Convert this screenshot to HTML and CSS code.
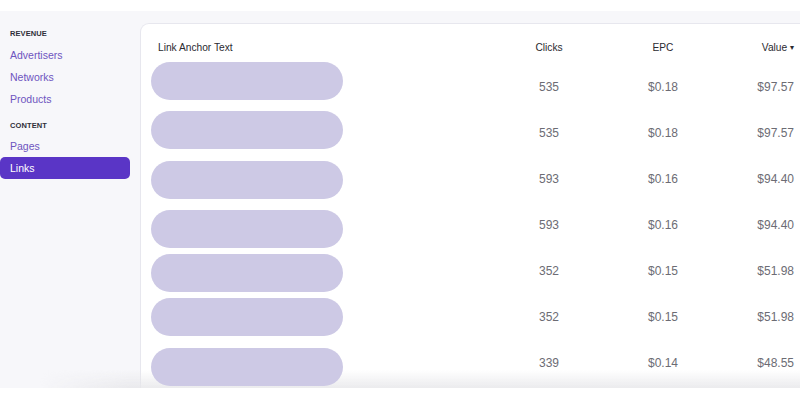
FILE: index.html
```html
<!DOCTYPE html>
<html>
<head>
<meta charset="utf-8">
<link rel="stylesheet" href="styles.css">
</head>
<body>
<div class="page">
  <div class="topbar"></div>
  <div class="main">
    <nav class="sidebar">
      <div class="label">Revenue</div>
      <a class="item lbl-gap">Advertisers</a>
      <a class="item">Networks</a>
      <a class="item">Products</a>
      <div class="label section">Content</div>
      <a class="item pages">Pages</a>
      <a class="item active">Links</a>
    </nav>
    <section class="card">
      <div class="thead">
        <div class="c-anchor">Link Anchor Text</div>
        <div class="c-num">Clicks</div>
        <div class="c-num">EPC</div>
        <div class="c-val">Value <span class="caret">&#9662;</span></div>
      </div>
      <div class="row"><div class="c-anchor"><span class="pill off-n6"></span></div><div class="c-num">535</div><div class="c-num">$0.18</div><div class="c-val">$97.57</div></div>
      <div class="row"><div class="c-anchor"><span class="pill off-n3"></span></div><div class="c-num">535</div><div class="c-num">$0.18</div><div class="c-val">$97.57</div></div>
      <div class="row"><div class="c-anchor"><span class="pill off-p1"></span></div><div class="c-num">593</div><div class="c-num">$0.16</div><div class="c-val">$94.40</div></div>
      <div class="row"><div class="c-anchor"><span class="pill off-p4"></span></div><div class="c-num">593</div><div class="c-num">$0.16</div><div class="c-val">$94.40</div></div>
      <div class="row"><div class="c-anchor"><span class="pill off-p2"></span></div><div class="c-num">352</div><div class="c-num">$0.15</div><div class="c-val">$51.98</div></div>
      <div class="row"><div class="c-anchor"><span class="pill"></span></div><div class="c-num">352</div><div class="c-num">$0.15</div><div class="c-val">$51.98</div></div>
      <div class="row"><div class="c-anchor"><span class="pill off-p4"></span></div><div class="c-num">339</div><div class="c-num">$0.14</div><div class="c-val">$48.55</div></div>
    </section>
  </div>
  <div class="bottombar"></div>
  <div class="fade"></div>
</div>
</body>
</html>
```
FILE: styles.css
```css
* { box-sizing: border-box; }
html, body { margin: 0; padding: 0; background: #ffffff; }
body { font-family: "Liberation Sans", Arial, sans-serif; }
.page { position: relative; width: 800px; height: 400px; overflow: hidden; display: flex; flex-direction: column; }
.topbar { height: 11px; background: #ffffff; flex: none; }
.main { height: 377px; flex: none; display: flex; background: #f7f7fa; overflow: hidden; }
.bottombar { flex: 1; background: #ffffff; }

.sidebar { width: 140px; flex: none; padding-top: 16px; display: flex; flex-direction: column; }
.label { font-size: 7.5px; font-weight: bold; text-transform: uppercase; color: #2e2e38; line-height: 14px; padding-left: 10px; letter-spacing: 0.1px; }
.label.section { margin-top: 9px; }
.item { display: block; height: 22px; line-height: 22px; padding-left: 10px; font-size: 10.5px; color: #6e55bf; width: 130px; border-radius: 4px; }
.item.lbl-gap { margin-top: 3px; }
.item.pages { margin-top: 2px; }
.item.active { background: #5a35c6; color: #ffffff; border-radius: 5px; }

.card { flex: 1; margin-top: 12px; background: #ffffff; border: 1px solid #e7e7ee; border-right: none; border-bottom: none; border-top-left-radius: 9px; }
.thead, .row { display: grid; grid-template-columns: 348px 120px 108px 1fr; align-items: center; }
.thead { padding-top: 17px; height: 40px; align-items: start; font-size: 10.2px; color: #2a2a30; line-height: 14px; }
.thead .c-anchor { padding-left: 17px; }
.row { height: 46px; font-size: 12px; color: #6c6c74; }
.c-num { text-align: center; }
.c-val { text-align: right; padding-right: 6px; }
.caret { font-size: 8px; position: relative; top: -1px; }
.pill { position: relative; z-index: 2; display: block; width: 192px; height: 38px; margin-left: 10px; border-radius: 19px; background: #cdc9e5; }
.off-n6 { transform: translateY(-6px); }
.off-n3 { transform: translateY(-3px); }
.off-p1 { transform: translateY(1px); }
.off-p2 { transform: translateY(2px); }
.off-p4 { transform: translateY(4px); }

.fade { position: absolute; z-index: 1; left: 40px; right: 0; top: 370px; height: 18px; pointer-events: none;
  background: linear-gradient(to bottom, rgba(235,235,238,0) 0%, rgba(230,230,233,0.8) 100%);
  -webkit-mask-image: linear-gradient(to right, transparent 0, #000 90px);
  mask-image: linear-gradient(to right, transparent 0, #000 90px); }
```
